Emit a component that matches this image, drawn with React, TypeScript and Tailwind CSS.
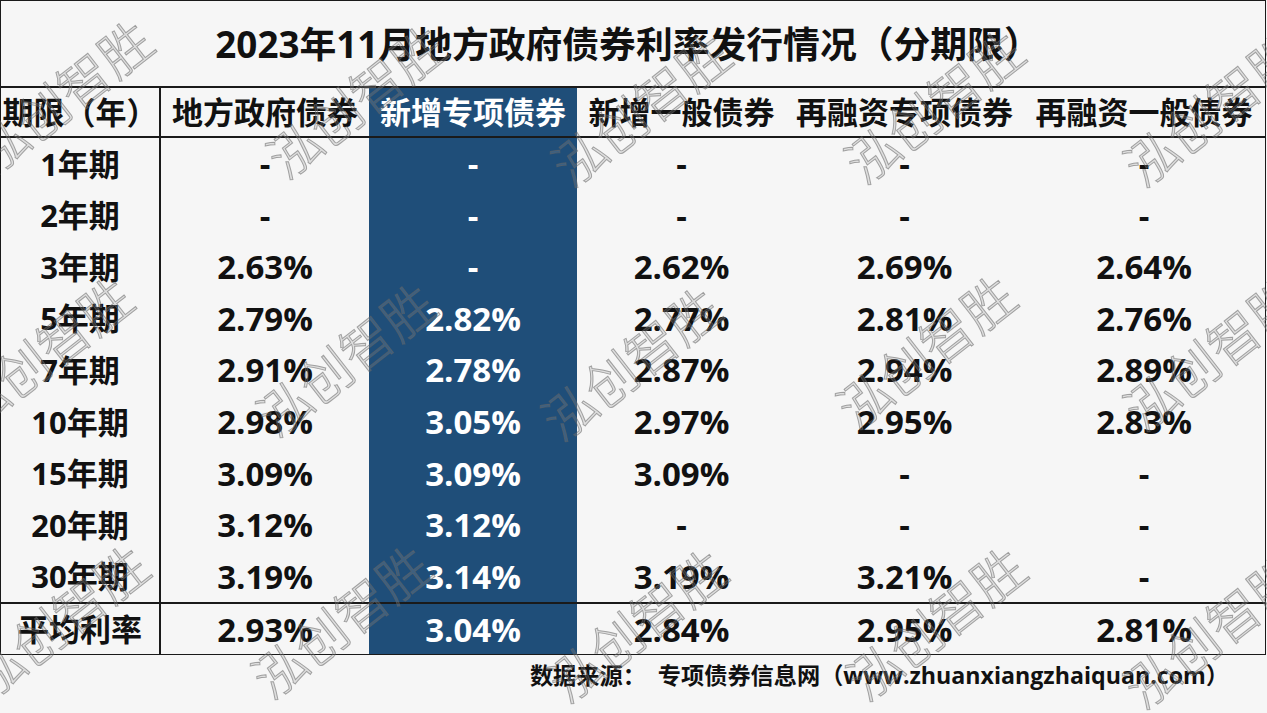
const rows = [
  { term: "1年期", vals: ["-", "-", "-", "-", "-"] },
  { term: "2年期", vals: ["-", "-", "-", "-", "-"] },
  { term: "3年期", vals: ["2.63%", "-", "2.62%", "2.69%", "2.64%"] },
  { term: "5年期", vals: ["2.79%", "2.82%", "2.77%", "2.81%", "2.76%"] },
  { term: "7年期", vals: ["2.91%", "2.78%", "2.87%", "2.94%", "2.89%"] },
  { term: "10年期", vals: ["2.98%", "3.05%", "2.97%", "2.95%", "2.83%"] },
  { term: "15年期", vals: ["3.09%", "3.09%", "3.09%", "-", "-"] },
  { term: "20年期", vals: ["3.12%", "3.12%", "-", "-", "-"] },
  { term: "30年期", vals: ["3.19%", "3.14%", "3.19%", "3.21%", "-"] },
];

const average = { term: "平均利率", vals: ["2.93%", "3.04%", "2.84%", "2.95%", "2.81%"] };

const headers = ["地方政府债券", "新增专项债券", "新增一般债券", "再融资专项债券", "再融资一般债券"];

// column widths after the first (term) column
const colClass = [
  "w-[208px]",
  "w-[208px] bg-[#1f4e79] text-white",
  "w-[209px]",
  "w-[237px]",
  "flex-1",
];

// watermark spots, written out so tailwind picks them up
const marks = [
  "left-[62px] top-[95px]",
  "left-[355px] top-[100px]",
  "left-[640px] top-[108px]",
  "left-[933px] top-[105px]",
  "left-[1212px] top-[108px]",
  "left-[42px] top-[352px]",
  "left-[345px] top-[358px]",
  "left-[630px] top-[362px]",
  "left-[925px] top-[350px]",
  "left-[1212px] top-[352px]",
  "left-[58px] top-[620px]",
  "left-[340px] top-[620px]",
  "left-[636px] top-[624px]",
  "left-[935px] top-[622px]",
  "left-[1212px] top-[630px]",
];

const Row = ({ term, vals, height }: { term: string; vals: string[]; height: string }) => (
  <div className={`flex ${height}`}>
    <div className="w-[160px] shrink-0 border-r-2 border-[#1a1a1a] flex items-center justify-center text-[31px] font-bold">
      {term}
    </div>
    {vals.map((v, i) => (
      <div key={i} className={`${colClass[i]} shrink-0 flex items-center justify-center text-[33px] font-bold`}>
        {v}
      </div>
    ))}
  </div>
);

export default function App() {
  return (
    <div className="relative w-[1267px] h-[713px] overflow-hidden bg-[#f6f6f6] text-[#111] font-['Open_Sans','Noto_Sans_CJK_SC',sans-serif]">
      <div className="w-[1266px] border border-[#1a1a1a] flex flex-col">
        {/* title */}
        <div className="h-[85px] flex items-center justify-center pr-[10px] pt-[2px] text-[36.8px] font-bold">
          2023年11月地方政府债券利率发行情况（分期限）
        </div>

        {/* header */}
        <div className="flex h-[52px] border-y-2 border-[#1a1a1a]">
          <div className="w-[160px] shrink-0 border-r-2 border-[#1a1a1a] flex items-center justify-center text-[31px] font-bold whitespace-nowrap">
            期限（年）
          </div>
          {headers.map((h, i) => (
            <div key={h} className={`${colClass[i]} shrink-0 flex items-center justify-center text-[31px] font-bold whitespace-nowrap`}>
              {h}
            </div>
          ))}
        </div>

        {rows.map((r) => (
          <Row key={r.term} term={r.term} vals={r.vals} height="h-[51.6px]" />
        ))}

        <div className="border-t-2 border-[#1a1a1a]">
          <Row term={average.term} vals={average.vals} height="h-[50px]" />
        </div>
      </div>

      {/* source */}
      <div className="flex justify-end items-center h-[40px] pr-[38px] text-[23.2px] font-bold whitespace-nowrap">
        <span>数据来源：</span>
        <span className="ml-[12px]">专项债券信息网（www.zhuanxiangzhaiquan.com）</span>
      </div>

      {/* watermark */}
      {marks.map((m) => (
        <div
          key={m}
          className={`absolute ${m} -translate-x-1/2 -translate-y-1/2 -rotate-[38deg] pointer-events-none whitespace-nowrap text-[52px] font-light tracking-[0px] text-[rgba(150,150,150,0.25)] [-webkit-text-stroke:1px_rgba(100,100,100,0.55)] font-['Noto_Sans_CJK_SC',sans-serif]`}
        >
          泓创智胜
        </div>
      ))}
    </div>
  );
}
